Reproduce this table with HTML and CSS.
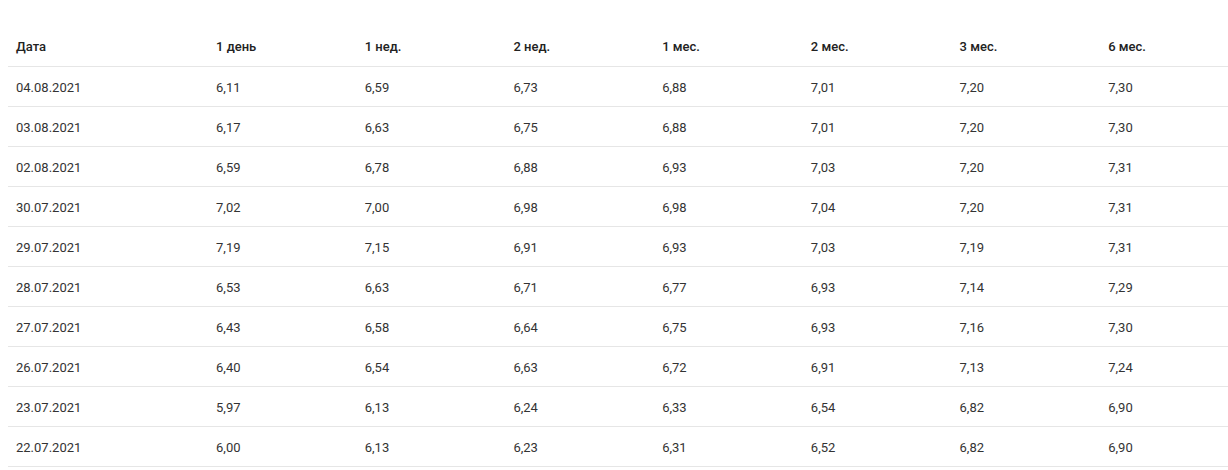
FILE: index.html
```html
<!DOCTYPE html>
<html lang="ru">
<head>
<meta charset="utf-8">
<title>Ставки</title>
<link rel="stylesheet" href="styles.css">
</head>
<body>
<div class="wrap">
<table class="rates">
<colgroup>
<col class="c-date"><col class="c"><col class="c"><col class="c"><col class="c"><col class="c"><col class="c"><col class="c">
</colgroup>
<thead>
<tr><th>Дата</th><th>1 день</th><th>1 нед.</th><th>2 нед.</th><th>1 мес.</th><th>2 мес.</th><th>3 мес.</th><th>6 мес.</th></tr>
</thead>
<tbody>
<tr><td>04.08.2021</td><td>6,11</td><td>6,59</td><td>6,73</td><td>6,88</td><td>7,01</td><td>7,20</td><td>7,30</td></tr>
<tr><td>03.08.2021</td><td>6,17</td><td>6,63</td><td>6,75</td><td>6,88</td><td>7,01</td><td>7,20</td><td>7,30</td></tr>
<tr><td>02.08.2021</td><td>6,59</td><td>6,78</td><td>6,88</td><td>6,93</td><td>7,03</td><td>7,20</td><td>7,31</td></tr>
<tr><td>30.07.2021</td><td>7,02</td><td>7,00</td><td>6,98</td><td>6,98</td><td>7,04</td><td>7,20</td><td>7,31</td></tr>
<tr><td>29.07.2021</td><td>7,19</td><td>7,15</td><td>6,91</td><td>6,93</td><td>7,03</td><td>7,19</td><td>7,31</td></tr>
<tr><td>28.07.2021</td><td>6,53</td><td>6,63</td><td>6,71</td><td>6,77</td><td>6,93</td><td>7,14</td><td>7,29</td></tr>
<tr><td>27.07.2021</td><td>6,43</td><td>6,58</td><td>6,64</td><td>6,75</td><td>6,93</td><td>7,16</td><td>7,30</td></tr>
<tr><td>26.07.2021</td><td>6,40</td><td>6,54</td><td>6,63</td><td>6,72</td><td>6,91</td><td>7,13</td><td>7,24</td></tr>
<tr><td>23.07.2021</td><td>5,97</td><td>6,13</td><td>6,24</td><td>6,33</td><td>6,54</td><td>6,82</td><td>6,90</td></tr>
<tr><td>22.07.2021</td><td>6,00</td><td>6,13</td><td>6,23</td><td>6,31</td><td>6,52</td><td>6,82</td><td>6,90</td></tr>
</tbody>
</table>
</div>
</body>
</html>
```
FILE: styles.css
```css
html, body {
  margin: 0;
  background: #ffffff;
  overflow: hidden;
}
.wrap {
  padding: 27px 0 0 8px;
  overflow: hidden;
}
.rates {
  border-collapse: collapse;
  table-layout: fixed;
  width: 1241px;
  font-family: Roboto, "Liberation Sans", Arial, sans-serif;
  font-size: 13px;
  color: #333333;
}
.c-date { width: 200px; }
.c { width: 148.7px; }
.rates th,
.rates td {
  height: 38px;
  padding: 1px 8px 0;
  text-align: left;
  vertical-align: middle;
  border-bottom: 1px solid #e6e6e6;
  white-space: nowrap;
}
.rates th {
  height: 39px;
  padding-top: 0;
  font-weight: 500;
  color: #222222;
}
.rates td {
  font-weight: 400;
}
```
